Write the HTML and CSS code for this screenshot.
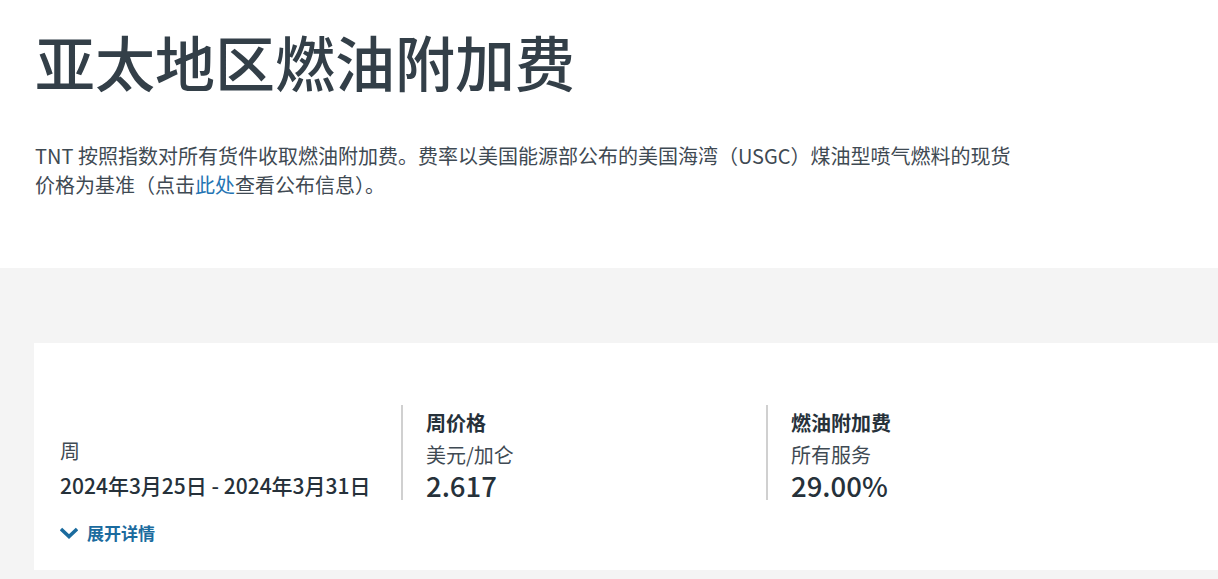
FILE: index.html
```html
<!DOCTYPE html>
<html lang="zh-CN">
  <head>
    <meta charset="UTF-8" />
    <meta name="viewport" content="width=device-width, initial-scale=1.0" />
    <title>亚太地区燃油附加费</title>
    <link rel="stylesheet" href="styles.css">
  </head>
  <body>
    <div class="intro">
      <h1>亚太地区燃油附加费</h1>
      <p>
        TNT 按照指数对所有货件收取燃油附加费。费率以美国能源部公布的美国海湾（USGC）煤油型喷气燃料的现货价格为基准（点击<a href="#">此处</a>查看公布信息）。
      </p>
    </div>

    <div class="band">
      <div class="card">
        <div class="row">
          <div class="col col-week">
            <div class="label">周</div>
            <div class="date">2024年3月25日 - 2024年3月31日</div>
          </div>
          <div class="col col-line">
            <div class="head">周价格</div>
            <div class="label">美元/加仑</div>
            <div class="value">2.617</div>
          </div>
          <div class="col col-line">
            <div class="head">燃油附加费</div>
            <div class="label">所有服务</div>
            <div class="value">29.00%</div>
          </div>
        </div>
        <a class="toggle" href="#">
          <svg width="18" height="12" viewBox="0 0 18 12">
            <path d="M1 2 L9 9.6 L17 2" fill="none" stroke="#1b6b9e" stroke-width="3.4" />
          </svg>
          展开详情
        </a>
      </div>
    </div>
  </body>
</html>
```

FILE: styles.css
```css
body {
  margin: 0;
  font-family: "Noto Sans CJK SC", "Noto Sans", sans-serif;
  color: #333f48;
  background-color: #fff;
}

.intro {
  padding: 19px 36px 0 35px;
  height: 249px;
}

h1 {
  margin: 0;
  font-size: 60px;
  font-weight: 500;
  line-height: 84px;
  color: #333f48;
}

p {
  margin: 38px 0 0 0;
  max-width: 990px;
  font-size: 20px;
  line-height: 29px;
  color: #3f4a53;
}

p a {
  color: #2474b3;
  text-decoration: none;
}

.band {
  background-color: #f4f4f4;
  padding: 75px 0 9px 34px;
}

.card {
  background-color: #fff;
  height: 227px;
  box-sizing: border-box;
  padding: 62px 0 0 0;
}

.row {
  display: flex;
  align-items: flex-end;
}

.col {
  width: 365px;
  box-sizing: border-box;
}

.col-week {
  width: 367px;
  padding-left: 26px;
}

.col-line {
  border-left: 2px solid #d0d0d0;
  padding-left: 23px;
}

.label {
  font-size: 20px;
  line-height: 30px;
  color: #3f4a53;
}

.col-week .label {
  line-height: 40px;
}

.date {
  font-size: 21px;
  font-weight: 500;
  line-height: 29px;
  color: #26313a;
}

.head {
  font-size: 20px;
  font-weight: 700;
  line-height: 35px;
  color: #26313a;
}

.value {
  font-size: 27.5px;
  font-weight: 500;
  line-height: 30px;
  color: #26313a;
}

.toggle {
  display: inline-flex;
  align-items: center;
  gap: 9px;
  margin: 20px 0 0 26px;
  font-size: 17px;
  font-weight: 700;
  color: #1b6b9e;
  text-decoration: none;
}
```
